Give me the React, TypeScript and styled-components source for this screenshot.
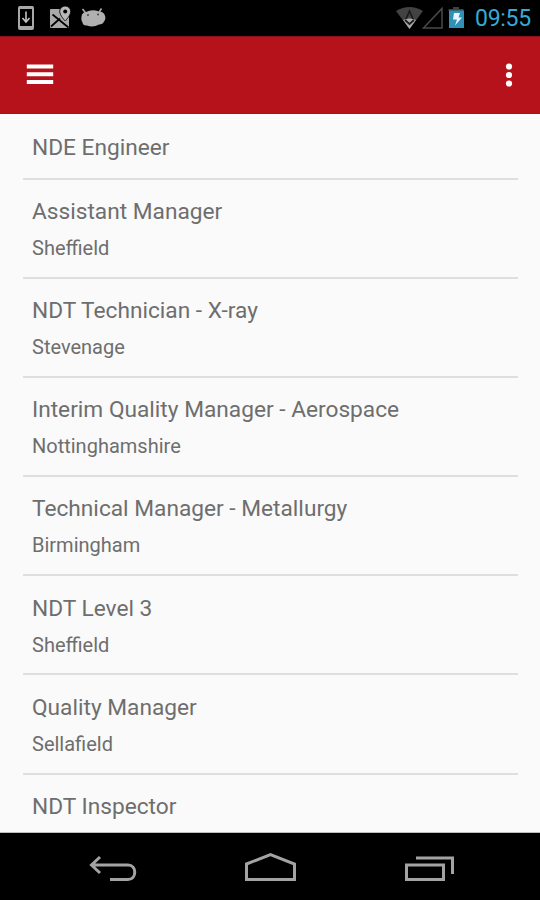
import React from "react";
import styled, { createGlobalStyle } from "styled-components";

const GlobalStyle = createGlobalStyle`
  html, body { margin: 0; padding: 0; overflow: hidden; background: #000; }
  * { box-sizing: border-box; }
`;

const Screen = styled.div`
  width: 540px;
  height: 900px;
  display: flex;
  flex-direction: column;
  overflow: hidden;
  background: #fafafa;
  font-family: Roboto, "Liberation Sans", sans-serif;
`;

const StatusBar = styled.div`
  flex: none;
  height: 36px;
  display: flex;
  justify-content: space-between;
  background: #000;
`;

const StatusGroup = styled.div`
  display: flex;
  align-items: center;
`;

const Clock = styled.span`
  width: 65px;
  padding-top: 2px;
  font-size: 23px;
  line-height: 34px;
  letter-spacing: -0.3px;
  color: #35a9d6;
  white-space: nowrap;
`;

const AppBar = styled.header`
  flex: none;
  height: 78px;
  display: flex;
  align-items: center;
  justify-content: space-between;
  padding: 0 27px 0 26px;
  background: #b5121b;
  border-top: 1px solid #8e1219;
  border-bottom: 1px solid #b80c12;
`;

const IconButton = styled.button`
  display: flex;
  padding: 0;
  border: 0;
  background: none;
`;

const List = styled.main`
  flex: 1;
  min-height: 0;
  overflow: hidden;
  padding: 0 22px 0 23px;
  border-bottom: 1px solid #bdbdbd;
`;

const Row = styled.div<{ $compact?: boolean }>`
  height: ${(p) => (p.$compact ? "66px" : "99.1px")};
  padding: ${(p) => (p.$compact ? "16px" : "14.2px")} 0 0 9px;
  border-bottom: 2px solid #dedede;

  &:last-child {
    height: auto;
    border-bottom: 0;
  }
`;

const Title = styled.div`
  font-size: 22.7px;
  line-height: 36px;
  color: #6e6e6e;
  white-space: nowrap;
`;

const Place = styled.div`
  font-size: 20px;
  line-height: 37px;
  color: #6e6e6e;
  white-space: nowrap;
`;

const NavBar = styled.nav`
  flex: none;
  height: 67px;
  display: flex;
  background: #000;
`;

const jobs = [
  { title: "NDE Engineer", compact: true },
  { title: "Assistant Manager", place: "Sheffield" },
  { title: "NDT Technician - X-ray", place: "Stevenage" },
  { title: "Interim Quality Manager - Aerospace", place: "Nottinghamshire" },
  { title: "Technical Manager - Metallurgy", place: "Birmingham" },
  { title: "NDT Level 3", place: "Sheffield" },
  { title: "Quality Manager", place: "Sellafield" },
  { title: "NDT Inspector" },
];

const NotificationIcons = () => (
  <svg width="120" height="36" viewBox="0 0 120 36">
    <rect x="19" y="7" width="14" height="22" rx="1" fill="none" stroke="#a8a8a8" strokeWidth="2" />
    <path d="M19 7.500h14M19 27.500h14" stroke="#a8a8a8" strokeWidth="3" />
    <path d="M26 11.500v9M22.500 18l3.500 4 3.500-4" fill="none" stroke="#c4c4c4" strokeWidth="1.6" />
    <path d="M51 9h9c-1 5 2 8 5 11l4-4v11q0 1-1 1H51q-1 0-1-1V10q0-1 1-1Z" fill="#aaa" />
    <path d="M52.500 14.500l16 13M51 26.500l9-8" stroke="#000" strokeWidth="1.7" />
    <path d="M65.200 6a5.500 5.500 0 0 0-5.500 5.500c0 4 5.500 9.500 5.500 9.500s5.500-5.500 5.500-9.500A5.500 5.500 0 0 0 65.200 6Z" fill="#b8b8b8" stroke="#000" strokeWidth=".8" />
    <circle cx="65.200" cy="11.500" r="2" fill="#000" />
    <path d="M82.500 9l4 5M101.500 8.500l-3.500 5.500" stroke="#aaa" strokeWidth="1.6" />
    <path d="M82 14.500q1-2.500 4-2.500 6-3 13-.5 4 0 5.500 3 2 4-.5 7-1 3-5 3-6 3.500-12 1-4 .5-4.500-3-2-3-.5-8Z" fill="#b0b0b0" />
    <circle cx="88" cy="15" r="1" fill="#444" />
    <circle cx="98" cy="14.500" r="1" fill="#444" />
  </svg>
);

const SignalIcons = () => (
  <svg width="80" height="36" viewBox="0 0 80 36">
    <path d="M1 11q13.500-8 27 0L14.500 29Z" fill="#424242" />
    <path d="M8 20q6.500-3 13 0l-6.500 9Z" fill="#a8a8a8" />
    <path d="M11 19l3.500-8 3.500 8M10 20l4.500 4 4.500-4" fill="none" stroke="#1c1c1c" strokeWidth="1.700" />
    <path d="M47 8.500v19.500H28.500Z" fill="none" stroke="#494949" strokeWidth="1.500" />
    <path d="M58 9V7h6v2h4.500v2h-15V9Z" fill="#414141" />
    <path d="M54 10.500h15v17.500H54Z" fill="#2f91b8" />
    <path d="M59 13h6l-1.500 4.500h3.500l-7 8 2-6h-4Z" fill="#e4f6fc" />
  </svg>
);

const MenuIcon = () => (
  <svg width="28" height="22" viewBox="0 0 28 22">
    <path d="M.8 2.500h26.400M.8 10.300h26.400M.8 18.100h26.400" stroke="#fff" strokeWidth="4" />
  </svg>
);

const OverflowIcon = () => (
  <svg width="8" height="24" viewBox="0 0 8 24">
    <circle cx="4" cy="3.500" r="3.100" fill="#fff" />
    <circle cx="4" cy="12" r="3.100" fill="#fff" />
    <circle cx="4" cy="20.500" r="3.100" fill="#fff" />
  </svg>
);

const NavIcons = () => (
  <svg width="540" height="67" viewBox="0 0 540 67" fill="none" stroke="#a3a3a3" strokeWidth="3">
    <path d="M100 24l-8.500 8 8.500 8M92 32h36c9 0 9 14.500 0 14.500h-18" />
    <path d="M246.500 31l24-9.500 24 9.500v15.500h-48Z" />
    <path d="M406.500 32h37v14.500h-37ZM416 25h36.500v16" />
  </svg>
);

export default function App() {
  return (
    <>
      <GlobalStyle />
      <Screen>
        <StatusBar>
          <StatusGroup>
            <NotificationIcons />
          </StatusGroup>
          <StatusGroup>
            <SignalIcons />
            <Clock>09:55</Clock>
          </StatusGroup>
        </StatusBar>
        <AppBar>
          <IconButton aria-label="Menu">
            <MenuIcon />
          </IconButton>
          <IconButton aria-label="More options">
            <OverflowIcon />
          </IconButton>
        </AppBar>
        <List>
          {jobs.map((job) => (
            <Row key={job.title} $compact={job.compact}>
              <Title>{job.title}</Title>
              {job.place && <Place>{job.place}</Place>}
            </Row>
          ))}
        </List>
        <NavBar>
          <NavIcons />
        </NavBar>
      </Screen>
    </>
  );
}
